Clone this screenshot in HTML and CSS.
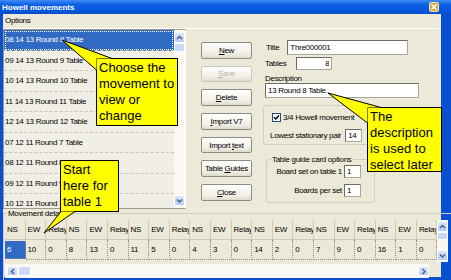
FILE: index.html
```html
<!DOCTYPE html>
<html lang="en">

<head>
    <meta charset="UTF-8">
    <title>Howell movements</title>
    <link rel="stylesheet" href="styles.css">
</head>

<body>
    <div class="window">
        <div class="titlebar">
            <span>Howell movements</span>
            <span class="close">
                <svg width="8" height="8" viewBox="0 0 8 8"><path d="M1.5 1.5 L6.5 6.5 M6.5 1.5 L1.5 6.5" stroke="#fff" stroke-width="1.6"/></svg>
            </span>
        </div>

        <div class="frame">
            <div class="menubar">Options</div>

            <div class="top">
                <div class="listbox">
                    <div class="items">
                        <div class="item selected"><span>08 14 13 Round 8 Table</span></div>
                        <div class="item">09 14 13 Round 9 Table</div>
                        <div class="item">10 14 13 Round 10 Table</div>
                        <div class="item">11 14 13 Round 11 Table</div>
                        <div class="item">12 14 13 Round 12 Table</div>
                        <div class="item">07 12 11 Round 7 Table</div>
                        <div class="item">08 12 11 Round 8 Table</div>
                        <div class="item">09 12 11 Round 9 Table</div>
                        <div class="item">10 12 11 Round 10 Table</div>
                    </div>
                    <div class="vscroll">
                        <div class="sbtn"><svg width="9" height="9" viewBox="0 0 9 9"><polyline points="2,6 4.5,3.5 7,6" fill="none" stroke="#4d6185" stroke-width="1.5"/></svg></div>
                        <div class="thumb"></div>
                        <div class="track"></div>
                        <div class="sbtn"><svg width="9" height="9" viewBox="0 0 9 9"><polyline points="2,3.5 4.5,6 7,3.5" fill="none" stroke="#4d6185" stroke-width="1.5"/></svg></div>
                    </div>
                </div>

                <div class="buttons">
                    <button><u>N</u>ew</button>
                    <button disabled><u>S</u>ave</button>
                    <button><u>D</u>elete</button>
                    <button><u>I</u>mport V7</button>
                    <button>Import <u>t</u>ext</button>
                    <button>Table <u>G</u>uides</button>
                    <button><u>C</u>lose</button>
                </div>

                <div class="form">
                    <div class="row-title">
                        <label>Title</label>
                        <input class="title-input" type="text" value="Thre000001">
                    </div>
                    <div class="row-tables">
                        <label>Tables</label>
                        <input class="tables-input" type="text" value="8">
                    </div>
                    <div class="desc-label">Description</div>
                    <input class="desc-input" type="text" value="13 Round 8 Table.">

                    <div class="group1">
                        <div class="check-row">
                            <svg width="9" height="9" viewBox="0 0 9 9"><rect x="0.5" y="0.5" width="8" height="8" fill="#fff" stroke="#1c5180"/><polyline points="2,4.3 3.7,6 7,2.6" fill="none" stroke="#000" stroke-width="1.4"/></svg>
                            <span>3/4 Howell movement</span>
                        </div>
                        <div class="num-row">
                            <label>Lowest stationary pair</label>
                            <input class="num" type="text" value="14">
                        </div>
                    </div>

                    <fieldset class="group2">
                        <legend>Table guide card options</legend>
                        <div class="num-row">
                            <label>Board set on table 1</label>
                            <input class="num" type="text" value="1">
                        </div>
                        <div class="num-row">
                            <label>Boards per set</label>
                            <input class="num" type="text" value="1">
                        </div>
                    </fieldset>
                </div>
            </div>

            <fieldset class="details">
                <legend>Movement details</legend>
                <div class="grid-area">
                    <div class="grid">
                        <div class="grid-row head">
                            <div>NS</div><div>EW</div><div>Relay</div>
                            <div>NS</div><div>EW</div><div>Relay</div>
                            <div>NS</div><div>EW</div><div>Relay</div>
                            <div>NS</div><div>EW</div><div>Relay</div>
                            <div>NS</div><div>EW</div><div>Relay</div>
                            <div>NS</div><div>EW</div><div>Relay</div>
                            <div>NS</div><div>EW</div><div>Relay</div>
                        </div>
                        <div class="grid-row data">
                            <div class="current">6</div><div>10</div><div>0</div>
                            <div>8</div><div>13</div><div>0</div>
                            <div>11</div><div>5</div><div>0</div>
                            <div>4</div><div>3</div><div>0</div>
                            <div>14</div><div>2</div><div>0</div>
                            <div>7</div><div>9</div><div>0</div>
                            <div>16</div><div>1</div><div>0</div>
                        </div>
                    </div>
                    <div class="vscroll small">
                        <div class="sbtn"><svg width="9" height="9" viewBox="0 0 9 9"><polyline points="2,6 4.5,3.5 7,6" fill="none" stroke="#4d6185" stroke-width="1.5"/></svg></div>
                        <div class="thumb"></div>
                        <div class="track"></div>
                        <div class="sbtn"><svg width="9" height="9" viewBox="0 0 9 9"><polyline points="2,3.5 4.5,6 7,3.5" fill="none" stroke="#4d6185" stroke-width="1.5"/></svg></div>
                    </div>
                </div>
                <div class="hscroll">
                    <div class="sbtn"><svg width="9" height="9" viewBox="0 0 9 9"><polyline points="6,2 3.5,4.5 6,7" fill="none" stroke="#4d6185" stroke-width="1.5"/></svg></div>
                    <div class="hthumb"></div>
                    <div class="track"></div>
                    <div class="sbtn"><svg width="9" height="9" viewBox="0 0 9 9"><polyline points="3.5,2 6,4.5 3.5,7" fill="none" stroke="#4d6185" stroke-width="1.5"/></svg></div>
                </div>
            </fieldset>
        </div>

        <!-- help callouts drawn over the dialog -->
        <div class="callout c1">Choose the movement to view or change</div>
        <div class="callout c2">Start here for table 1</div>
        <div class="callout c3">The description is used to select later</div>
        <svg class="pointers" width="451" height="280" viewBox="0 0 451 280">
            <polygon points="62,40 96.5,70 96.5,58.5 112,58.5" fill="#ffff00"/>
            <polyline points="96.5,70 62,40 112,58.5" fill="none" stroke="#000"/>
            <polygon points="44,233 61,211.5 75,211.5" fill="#ffff00"/>
            <polyline points="61,211.5 44,233 75,211.5" fill="none" stroke="#000"/>
            <polygon points="328,93 367.5,123 367.5,107.5 381,107.5" fill="#ffff00"/>
            <polyline points="367.5,123 328,93 381,107.5" fill="none" stroke="#000"/>
        </svg>
    </div>
</body>

</html>
```

FILE: styles.css
```css
* {
    box-sizing: border-box;
}

body {
    margin: 0;
    font-family: "Liberation Sans", Arial, sans-serif;
    font-size: 8px;
    letter-spacing: -0.3px;
    color: #000;
}

.window {
    position: relative;
    width: 451px;
    height: 280px;
    background-color: #0a4fd0;
    overflow: hidden;
}

.titlebar {
    height: 14px;
    display: flex;
    align-items: center;
    justify-content: space-between;
    padding: 0 12px 0 2px;
    background: linear-gradient(#3f8cf6, #0c5fe4 35%, #0756dd 75%, #0a4cc6);
    color: #fff;
    font-weight: bold;
    letter-spacing: 0;
}

.close {
    width: 10px;
    height: 10px;
    display: flex;
    align-items: center;
    justify-content: center;
    background-color: #d2a540;
    border: 1px solid #f3e2b4;
    border-radius: 2px;
}

.frame {
    margin-left: 3px;
    width: 438px;
    height: 263px;
    background-color: #ece9d8;
}

.menubar {
    height: 15px;
    line-height: 13px;
    padding-left: 2px;
    border-bottom: 1px solid #fff;
}

.top {
    display: flex;
    height: 180px;
}

/* movement list */
.listbox {
    width: 183px;
    height: 180px;
    display: flex;
    border: 1px solid #9d9a8c;
    border-right-color: #fff;
    background-color: #f1efe5;
}

.items {
    flex: 1;
    overflow: hidden;
}

.item {
    height: 20.5px;
    line-height: 20px;
    padding-left: 1px;
    border-bottom: 1px dashed #c9c5b5;
    white-space: nowrap;
}

.item.selected {
    background-color: #316ac5;
    color: #fff;
    outline: 1px dotted #fff;
    outline-offset: -2px;
}

.vscroll {
    width: 11px;
    display: flex;
    flex-direction: column;
    padding: 2px 0 2px 0;
    background-color: #f9f8f3;
}

.sbtn {
    width: 11px;
    height: 11px;
    display: flex;
    align-items: center;
    justify-content: center;
    background: linear-gradient(#dbe6fd, #b7cbf5);
    border: 1px solid #fff;
    border-radius: 2px;
}

.thumb {
    height: 9px;
    background-color: #cad8f8;
    border: 1px solid #fff;
    border-radius: 2px;
}

.track {
    flex: 1;
}

/* command buttons */
.buttons {
    width: 51px;
    margin-left: 15px;
    padding-top: 13px;
    display: flex;
    flex-direction: column;
    gap: 7.2px;
}

button {
    height: 16.5px;
    padding: 0;
    font-family: inherit;
    font-size: 8px;
    letter-spacing: -0.3px;
    color: #000;
    background: linear-gradient(#fefefd, #f1efe6 70%, #dedbcc);
    border: 1px solid #8e8c80;
    border-radius: 2px;
}

button:disabled {
    color: #b4b1a3;
    border-color: #c9c7ba;
}

/* right hand form */
.form {
    margin-left: 13px;
    width: 176px;
    padding-top: 11px;
    white-space: nowrap;
}

input {
    font-family: inherit;
    font-size: 8px;
    letter-spacing: -0.3px;
    padding: 0 2px;
    background-color: #fff;
    border: 1px solid #aaa89a;
    border-top-color: #6f6d63;
    border-left-color: #6f6d63;
}

.row-title {
    display: flex;
    align-items: center;
    height: 15px;
    padding-left: 1px;
}

.title-input {
    margin-left: 8px;
    width: 121px;
    height: 15px;
}

.row-tables {
    display: flex;
    align-items: center;
    margin-top: 2px;
    height: 13px;
}

.tables-input {
    margin-left: 10px;
    width: 36px;
    height: 13px;
    text-align: right;
}

.desc-label {
    margin-top: 4px;
    line-height: 9px;
}

.desc-input {
    display: block;
    width: 154px;
    height: 15px;
}

.group1 {
    margin: 7px 0 0 -2px;
    width: 112px;
    height: 40px;
    border: 1px solid #d0cebf;
    border-radius: 3px;
    padding: 7px 0 0 8px;
}

.check-row {
    display: flex;
    align-items: center;
    gap: 2px;
    height: 9px;
}

.group1 .num-row {
    margin: 7px 0 0 -2px;
    justify-content: flex-start;
    gap: 4px;
}

.num-row {
    display: flex;
    align-items: center;
    justify-content: flex-end;
    gap: 2px;
}

.num {
    width: 17px;
    height: 13px;
}

.group2 {
    margin: 9.5px 0 0 1px;
    width: 109px;
    height: 48.5px;
    padding: 1.5px 13px 0 0;
    border: 1px solid #d0cebf;
    border-radius: 3px;
}

.group2 legend {
    line-height: 9px;
    padding: 0 1px;
    margin-left: 4px;
}

.group2 .num-row + .num-row {
    margin-top: 6px;
}

/* movement details grid */
.details {
    margin: 0;
    height: 83px;
    padding: 2px 3px 0 1px;
    border: 1px solid #d0cebf;
    border-bottom: none;
}

.details legend {
    line-height: 9px;
    padding: 0 1px;
    margin-left: 2px;
}

.grid-area {
    display: flex;
    height: 42px;
}

.grid {
    flex: 1;
    overflow: hidden;
}

.grid-row {
    display: flex;
    height: 20px;
}

.grid-row div {
    flex: 0 0 20.6px;
    width: 20.6px;
    overflow: hidden;
    white-space: nowrap;
    padding-left: 2px;
    line-height: 19px;
}

.grid-row.head div {
    border-right: 1px solid #cbc8b8;
    border-bottom: 1px solid #cbc8b8;
}

.grid-row.data div {
    border-right: 1px dotted #8e8c80;
    border-bottom: 1px dotted #8e8c80;
}

.grid-row.data .current {
    background-color: #316ac5;
    color: #fff;
    margin: 1px 0 1px 0;
    line-height: 17px;
}

.vscroll.small {
    padding: 1px 0;
    background-color: #f9f8f3;
}

.vscroll.small .thumb {
    height: 8px;
}

.hscroll {
    display: flex;
    margin-top: 2px;
    width: 424px;
    height: 14px;
    padding: 2px 0 2px 2px;
    background-color: #f9f8f3;
}

.hscroll .sbtn {
    height: 10px;
}

.hthumb {
    width: 13px;
    height: 10px;
    background-color: #cad8f8;
    border: 1px solid #fff;
    border-radius: 2px;
}

/* callouts */
.callout {
    position: absolute;
    background-color: #ffff00;
    border: 1px solid #000;
    font-size: 13px;
    line-height: 16px;
    letter-spacing: 0;
    padding: 1px 2px;
    color: #000;
}

.c1 {
    left: 96px;
    top: 58px;
    width: 82px;
    height: 68px;
}

.c2 {
    left: 60px;
    top: 160px;
    width: 59px;
    height: 52px;
}

.c3 {
    left: 367px;
    top: 107px;
    width: 75px;
    height: 65px;
}

.pointers {
    position: absolute;
    left: 0;
    top: 0;
}
```
